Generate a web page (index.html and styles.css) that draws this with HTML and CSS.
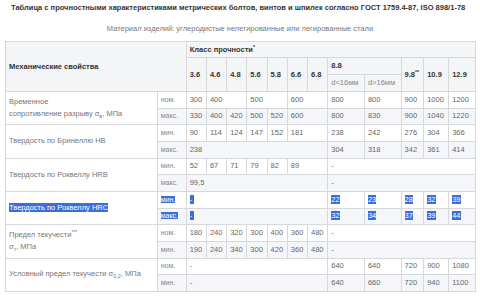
FILE: index.html
```html
<!DOCTYPE html>
<html lang="ru">
<head>
<meta charset="utf-8">
<title>Таблица прочностных характеристик</title>
<link rel="stylesheet" href="styles.css">
</head>
<body>
<div class="page">
  <h1 class="title">Таблица с прочностными характеристиками метрических болтов, винтов и шпилек согласно ГОСТ 1759.4-87, ISO 898/1-78</h1>
  <p class="subtitle">Материал изделий: углеродистые нелегированные или легированные стали</p>
  <table class="grid">
    <colgroup>
      <col class="c-label"><col class="c-kind">
      <col class="c-s"><col class="c-s"><col class="c-s"><col class="c-s"><col class="c-s"><col class="c-s"><col class="c-s">
      <col class="c-d"><col class="c-d">
      <col class="c-98"><col class="c-109"><col class="c-129">
    </colgroup>
    <thead>
      <tr class="h1">
        <th colspan="2" rowspan="3" class="left">Механические свойства</th>
        <th colspan="12">Класс прочности<sup>*</sup></th>
      </tr>
      <tr class="h2">
        <th rowspan="2">3.6</th><th rowspan="2">4.6</th><th rowspan="2">4.8</th><th rowspan="2">5.6</th><th rowspan="2">5.8</th><th rowspan="2">6.6</th><th rowspan="2">6.8</th>
        <th colspan="2" class="top">8.8</th>
        <th rowspan="2">9.8<sup>**</sup></th><th rowspan="2">10.9</th><th rowspan="2">12.9</th>
      </tr>
      <tr class="h3">
        <td class="sub">d&lt;16мм</td><td class="sub">d&gt;16мм</td>
      </tr>
    </thead>
    <tbody>
      <tr>
        <td rowspan="2" class="label">Временное<br>сопротивление разрыву σ<sub>в</sub>, МПа</td>
        <td class="kind">ном.</td>
        <td>300</td><td colspan="2">400</td><td colspan="2">500</td><td colspan="2">600</td>
        <td>800</td><td>800</td><td>900</td><td>1000</td><td>1200</td>
      </tr>
      <tr class="alt">
        <td class="kind">макс.</td>
        <td>330</td><td>400</td><td>420</td><td>500</td><td>520</td><td colspan="2">600</td>
        <td>800</td><td>830</td><td>900</td><td>1040</td><td>1220</td>
      </tr>
      <tr>
        <td rowspan="2" class="label">Твердость по Бринеллю HB</td>
        <td class="kind">мин.</td>
        <td>90</td><td>114</td><td>124</td><td>147</td><td>152</td><td colspan="2">181</td>
        <td>238</td><td>242</td><td>276</td><td>304</td><td>366</td>
      </tr>
      <tr class="alt">
        <td class="kind">макс.</td>
        <td colspan="7">238</td>
        <td>304</td><td>318</td><td>342</td><td>361</td><td>414</td>
      </tr>
      <tr>
        <td rowspan="2" class="label">Твердость по Роквеллу HRB</td>
        <td class="kind">мин.</td>
        <td>52</td><td>67</td><td>71</td><td>79</td><td>82</td><td colspan="2">89</td>
        <td colspan="5">-</td>
      </tr>
      <tr class="alt">
        <td class="kind">макс.</td>
        <td colspan="7">99,5</td>
        <td colspan="5">-</td>
      </tr>
      <tr>
        <td rowspan="2" class="label"><span class="sel">Твердость по Роквеллу HRC</span></td>
        <td class="kind"><span class="sel">мин.</span></td>
        <td colspan="7"><span class="sel dash">-</span></td>
        <td><span class="sel">22</span></td><td><span class="sel">23</span></td><td><span class="sel">28</span></td><td><span class="sel">32</span></td><td><span class="sel">39</span></td>
      </tr>
      <tr class="alt">
        <td class="kind"><span class="sel">макс.</span></td>
        <td colspan="7"><span class="sel dash">-</span></td>
        <td><span class="sel">32</span></td><td><span class="sel">34</span></td><td><span class="sel">37</span></td><td><span class="sel">39</span></td><td><span class="sel">44</span></td>
      </tr>
      <tr>
        <td rowspan="2" class="label">Предел текучести<sup>***</sup><br>σ<sub>т</sub>, МПа</td>
        <td class="kind">ном.</td>
        <td>180</td><td>240</td><td>320</td><td>300</td><td>400</td><td>360</td><td>480</td>
        <td colspan="5">-</td>
      </tr>
      <tr class="alt">
        <td class="kind">мин.</td>
        <td>190</td><td>240</td><td>340</td><td>300</td><td>420</td><td>360</td><td>480</td>
        <td colspan="5">-</td>
      </tr>
      <tr>
        <td rowspan="2" class="label">Условный предел текучести σ<sub>0,2</sub>, МПа</td>
        <td class="kind">ном.</td>
        <td colspan="7">-</td>
        <td>640</td><td>640</td><td>720</td><td>900</td><td>1080</td>
      </tr>
      <tr class="alt">
        <td class="kind">мин.</td>
        <td colspan="7">-</td>
        <td>640</td><td>660</td><td>720</td><td>940</td><td>1100</td>
      </tr>
    </tbody>
  </table>
</div>
</body>
</html>
```
FILE: styles.css
```css
html, body {
  margin: 0;
  padding: 0;
  background: #ffffff;
}

body {
  font-family: "Liberation Sans", Arial, sans-serif;
  color: #666666;
}

.page {
  padding: 3px 5px 0 5px;
}

.title {
  margin: 0 0 0 6px;
  font-size: 7.5px;
  line-height: 10px;
  font-weight: bold;
  color: #333333;
  white-space: nowrap;
}

.subtitle {
  margin: 10.5px 0 0 0;
  font-size: 7.5px;
  line-height: 10px;
  text-align: center;
  color: #777777;
}

.grid {
  margin-top: 7.5px;
  width: 470px;
  table-layout: fixed;
  border-collapse: collapse;
  font-size: 7.5px;
  line-height: 10px;
}

.c-label { width: 151.7px; }
.c-kind { width: 29px; }
.c-s { width: 20.23px; }
.c-d { width: 36.7px; }
.c-98 { width: 22.6px; }
.c-109 { width: 25px; }
.c-129 { width: 26.7px; }

.grid th,
.grid td {
  border: 1px solid #d6d8dc;
  padding: 0 3px;
  text-align: left;
  vertical-align: middle;
  white-space: nowrap;
  overflow: hidden;
}

.grid thead th,
.grid thead td {
  background: #f4f5f7;
}

.grid th {
  font-weight: bold;
  color: #333333;
}

.grid .sub {
  color: #888888;
}

.h1 { height: 16px; }
.h2 { height: 17px; }
.h3 { height: 17px; }

.grid tbody tr {
  height: 16.67px;
}

.grid tbody tr.alt td {
  background: #f4f6f9;
}

.grid tbody td.label {
  background: #ffffff;
  white-space: normal;
  line-height: 12.5px;
  color: #777777;
}

.grid td.kind {
  font-size: 7px;
  color: #888888;
}

sup {
  font-size: 5px;
  line-height: 0;
  vertical-align: 3px;
}

sub {
  font-size: 5.5px;
  line-height: 0;
  vertical-align: -1.5px;
}

.sel {
  background: #3b6fd6;
  color: #ffffff;
}

.dash {
  padding-right: 2px;
}
```
